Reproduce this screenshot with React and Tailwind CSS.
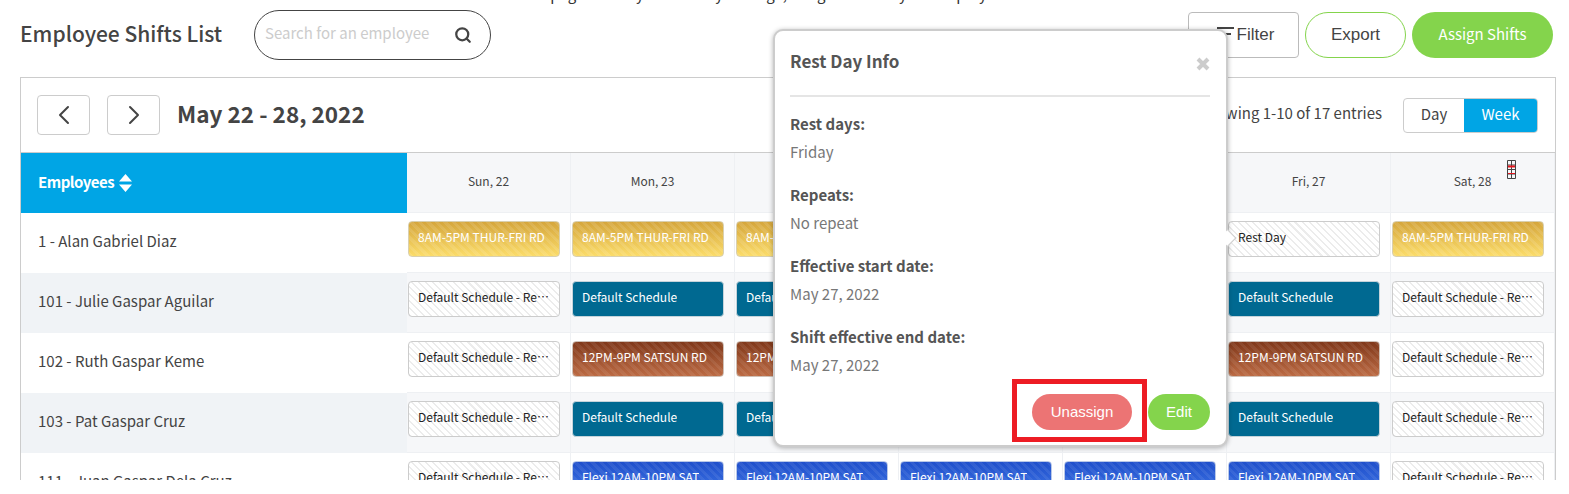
import React from "react";
import { ChevronLeft, ChevronRight, Search } from "lucide-react";

const days = ["Sun, 22", "Mon, 23", "Tue, 24", "Wed, 25", "Thu, 26", "Fri, 27", "Sat, 28"];

const gold = "8AM-5PM THUR-FRI RD";
const teal = "Default Schedule";
const brown = "12PM-9PM SATSUN RD";
const flexi = "Flexi 12AM-10PM SAT";
const rest = "Default Schedule - Rest Day";

const pillStyles = {
  [gold]: "text-white border-[#d9d0b0] bg-[repeating-linear-gradient(45deg,rgba(255,255,255,0.1)_0px,rgba(255,255,255,0.1)_3px,transparent_3px,transparent_6px),linear-gradient(180deg,#d5a63c,#fbdc6a)]",
  [teal]: "text-white border-[#c5d3da] bg-[#006991]",
  [brown]: "text-white border-[#cfc0b6] bg-[repeating-linear-gradient(45deg,rgba(255,255,255,0.07)_0px,rgba(255,255,255,0.07)_3px,transparent_3px,transparent_6px),linear-gradient(180deg,#80381a,#bc6b44)]",
  [flexi]: "text-white border-[#b9c8e8] bg-[repeating-linear-gradient(45deg,rgba(255,255,255,0.07)_0px,rgba(255,255,255,0.07)_3px,transparent_3px,transparent_6px),linear-gradient(180deg,#1f4fcb,#3f76e6)]",
  [rest]: "text-[#222] border-[#cccccc] bg-[repeating-linear-gradient(45deg,#ececec_0px,#ececec_1.5px,#ffffff_1.5px,#ffffff_5px)]",
  "Rest Day": "text-[#222] border-[#cccccc] bg-[repeating-linear-gradient(45deg,#ececec_0px,#ececec_1.5px,#ffffff_1.5px,#ffffff_5px)]",
};

const rows = [
  { name: "1 - Alan Gabriel Diaz", shifts: [gold, gold, gold, gold, gold, "Rest Day", gold] },
  { name: "101 - Julie Gaspar Aguilar", shifts: [rest, teal, teal, teal, teal, teal, rest] },
  { name: "102 - Ruth Gaspar Keme", shifts: [rest, brown, brown, brown, brown, brown, rest] },
  { name: "103 - Pat Gaspar Cruz", shifts: [rest, teal, teal, teal, teal, teal, rest] },
  { name: "111 - Juan Gaspar Dela Cruz", shifts: [rest, flexi, flexi, flexi, flexi, flexi, rest] },
];

const Pill = ({ label }) => (
  <div className={`w-[152px] h-9 mt-2 ml-px px-[9px] flex items-center rounded border text-xs font-normal ${pillStyles[label]}`}>
    <span className="truncate pb-[4px]">{label}</span>
  </div>
);

const Field = ({ label, value }) => (
  <div className="mb-[21px]">
    <div className="text-[15px] font-bold leading-[22px] text-[#555]">{label}</div>
    <div className="mt-[6px] text-[15px] leading-[22px] text-[#777]">{value}</div>
  </div>
);

export default function App() {
  return (
    <div className="relative w-[1569px] h-[494px] bg-white overflow-hidden font-['Noto_Sans_CJK_KR','Noto_Sans',sans-serif] text-[#444]">
      <div className="h-[480px] overflow-hidden">
        <div className="h-[10px] overflow-visible text-center">
          <p className="relative -top-[17px] ml-[8px] text-[15px] leading-[22px] text-[#333]">This page allows you to easily manage, assign and edit your employee's shifts.</p>
        </div>

        {/* Header */}
        <div className="flex items-center h-[50px] pl-5 pr-4">
          <h1 className="w-[234px] text-[21px] font-medium leading-none pb-[4px]">Employee Shifts List</h1>
          <div className="w-[237px] h-[50px] flex items-center justify-between pl-[10px] pr-[18px] rounded-full border border-[#444]">
            <span className="text-[15px] text-[#ccc] pb-[4px]">Search for an employee</span>
            <Search size={18} strokeWidth={3} className="text-[#444] -mt-px" />
          </div>
          <div className="ml-auto flex items-center gap-[6px]">
            <div className="w-[111px] h-[46px] flex items-center justify-center gap-1 pl-1 rounded border border-[#bbb] font-['Liberation_Sans',sans-serif] text-[17px]">
              <svg width="17" height="14" viewBox="0 0 17 14" className="mr-[-1px] -mt-[2px]">
                <path d="M0 1h17M3 7h11M6 13h5" stroke="#444" strokeWidth="2" />
              </svg>
              Filter
            </div>
            <div className="w-[101px] h-[46px] flex items-center justify-center rounded-full border border-[#84d44c] font-['Liberation_Sans',sans-serif] text-[17px]">Export</div>
            <div className="w-[141px] h-[46px] flex items-center justify-center rounded-full bg-[#84d44c] text-white text-[15px] font-normal pb-[2px]">Assign Shifts</div>
          </div>
        </div>

        {/* Card */}
        <div className="mt-[17px] ml-5 w-[1536px] border border-[#ccc]">
          <div className="h-[75px] flex items-center pl-4 pr-[17px] border-b border-[#ccc]">
            <div className="w-[53px] h-10 flex items-center justify-center rounded border border-[#ccc]">
              <ChevronLeft size={32} strokeWidth={1.5} />
            </div>
            <div className="ml-[17px] w-[53px] h-10 flex items-center justify-center rounded border border-[#ccc]">
              <ChevronRight size={32} strokeWidth={1.5} />
            </div>
            <div className="ml-[17px] text-[22.5px] font-bold pb-[2px]">May 22 - 28, 2022</div>
            <div className="ml-auto text-[15px] pb-[3px]">Showing 1-10 of 17 entries</div>
            <div className="ml-[21px] flex h-[35px] rounded border border-[#ccc] overflow-hidden text-[15px]">
              <div className="w-[60px] flex items-center justify-center pb-[2px]">Day</div>
              <div className="w-[73px] flex items-center justify-center pb-[2px] bg-[#00a5e5] text-white">Week</div>
            </div>
          </div>

          <div className="grid grid-cols-[386px_repeat(7,164px)]">
            <div className="h-[60px] flex items-center gap-[5px] pl-[17px] bg-[#00a5e5] text-white text-[15px] font-bold tracking-[-0.5px]">
              <span className="pb-[2px]">Employees</span>
              <svg width="13" height="18" viewBox="0 0 13 18">
                <path d="M6.5 0L13 7.5H0zM0 10.5h13L6.5 18z" fill="#fff" />
              </svg>
            </div>
            {days.map((d) => (
              <div key={d} className="h-[60px] flex items-center justify-center pb-[3px] bg-[#f6f7f9] border-r border-b border-[#eef0f3] text-xs">{d}</div>
            ))}

            {rows.map((row, i) => (
              <React.Fragment key={row.name}>
                <div className={`h-[60px] flex items-center pl-[17px] text-[15px] ${i % 2 ? "bg-[#f0f3f6]" : "bg-white"}`}>
                  <span className="pb-[4px]">{row.name}</span>
                </div>
                {row.shifts.map((s, j) => (
                  <div key={j} className={`h-[60px] border-r border-b border-[#eef0f3] ${i % 2 ? "bg-[#f6f7f9]" : "bg-white"}`}>
                    <Pill label={s} />
                  </div>
                ))}
              </React.Fragment>
            ))}
          </div>
        </div>
      </div>

      {/* Missing glyph boxes in the Sat header */}
      <svg width="9" height="19" viewBox="0 0 9 19" className="absolute left-[1507px] top-[160px]">
        <path d="M.5.5h8v18h-8zM.5 5h8M.5 9.500h8M.5 14h8M4.500.5v18" fill="none" stroke="#444" />
        <path d="M1 6.500h7" stroke="#e8141c" strokeWidth="2" />
        <path d="M1 13.500h7" stroke="#e8141c" strokeWidth="1" />
      </svg>

      {/* Rest day popover */}
      <div className="absolute left-[773px] top-[29px] w-[455px] h-[418px] pl-[15px] pr-4 pt-[19px] rounded-[10px] bg-white border-2 border-[#ccc] shadow-[0_1px_5px_rgba(0,0,0,0.3)]">
        <div className="absolute -right-[8px] top-[201px] w-3 h-3 rotate-45 bg-white border-t border-r border-[#ccc]" />
        <div className="flex items-start justify-between h-[47px] border-b-2 border-[#e5e5e5]">
          <div className="text-[17px] font-bold leading-[22px] text-[#555]">Rest Day Info</div>
          <svg width="14" height="14" viewBox="0 0 14 14" className="mt-[7px]">
            <path d="M2 2l10 10M12 2L2 12" stroke="#ccc" strokeWidth="4" />
          </svg>
        </div>
        <div className="pt-4">
          <Field label="Rest days:" value="Friday" />
          <Field label="Repeats:" value="No repeat" />
          <Field label="Effective start date:" value="May 27, 2022" />
          <Field label="Shift effective end date:" value="May 27, 2022" />
        </div>
        <div className="absolute right-4 bottom-[15px] flex gap-4 font-['Liberation_Sans',sans-serif] text-[15px] text-white">
          <div className="w-[100px] h-[36px] flex items-center justify-center rounded-full bg-[#ec7474]">Unassign</div>
          <div className="w-[62px] h-[36px] flex items-center justify-center rounded-full bg-[#84d44c]">Edit</div>
        </div>
      </div>

      {/* Annotation box */}
      <div className="absolute left-[1012px] top-[379px] w-[135px] h-[63px] border-[5px] border-[#ed1c24]" />
    </div>
  );
}
